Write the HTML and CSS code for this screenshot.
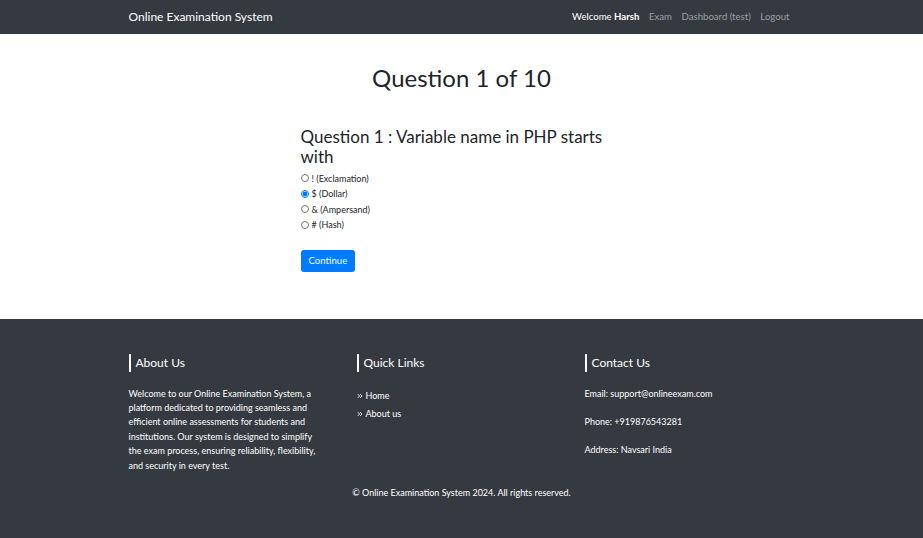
FILE: index.html
```html
<!DOCTYPE html>
<html lang="en">
<head>
<meta charset="utf-8">
<title>Online Examination System</title>
<link rel="stylesheet" href="styles.css">
</head>
<body>
<nav class="navbar">
  <div class="container nav-inner">
    <a class="brand" href="#">Online Examination System</a>
    <ul class="nav-links">
      <li class="welcome">Welcome <b>Harsh</b></li>
      <li><a href="#">Exam</a></li>
      <li><a href="#">Dashboard (test)</a></li>
      <li><a href="#">Logout</a></li>
    </ul>
  </div>
</nav>

<main class="container main">
  <h1 class="page-title">Question 1 of 10</h1>
  <form class="question">
    <h3 class="q-text">Question 1 : Variable name in PHP starts with</h3>
    <label class="opt"><input type="radio" name="ans"> ! (Exclamation)</label>
    <label class="opt"><input type="radio" name="ans" checked> $ (Dollar)</label>
    <label class="opt"><input type="radio" name="ans"> &amp; (Ampersand)</label>
    <label class="opt"><input type="radio" name="ans"> # (Hash)</label>
    <button type="button" class="btn">Continue</button>
  </form>
</main>

<footer class="footer">
  <div class="container">
    <div class="cols">
      <div class="col">
        <h5 class="f-head">About Us</h5>
        <p class="about">Welcome to our Online Examination System, a platform dedicated to providing seamless and efficient online assessments for students and institutions. Our system is designed to simplify the exam process, ensuring reliability, flexibility, and security in every test.</p>
      </div>
      <div class="col">
        <h5 class="f-head">Quick Links</h5>
        <ul class="links">
          <li><svg class="chev" viewBox="0 0 8 8" width="6" height="6"><path d="M1 1.5 L3.5 4 L1 6.5 M4.2 1.5 L6.7 4 L4.2 6.5" fill="none" stroke="#e9ecef" stroke-width="1.3"/></svg><a href="#">Home</a></li>
          <li><svg class="chev" viewBox="0 0 8 8" width="6" height="6"><path d="M1 1.5 L3.5 4 L1 6.5 M4.2 1.5 L6.7 4 L4.2 6.5" fill="none" stroke="#e9ecef" stroke-width="1.3"/></svg><a href="#">About us</a></li>
        </ul>
      </div>
      <div class="col">
        <h5 class="f-head">Contact Us</h5>
        <p class="contact">Email: support@onlineexam.com</p>
        <p class="contact">Phone: +919876543281</p>
        <p class="contact">Address: Navsari India</p>
      </div>
    </div>
    <p class="copy">© Online Examination System 2024. All rights reserved.</p>
  </div>
</footer>
</body>
</html>
```

FILE: styles.css
```css
* { box-sizing: border-box; }
html, body { margin: 0; padding: 0; }
body {
  font-family: "Lato", "Open Sans", sans-serif;
  font-size: 9.6px;
  line-height: 1.5;
  color: #212529;
  background: #fff;
}
a { text-decoration: none; color: inherit; }

.container {
  width: 684px;
  margin: 0 auto;
  padding: 0 9px;
}

.navbar {
  background: #343a40;
  height: 34px;
}
.nav-inner {
  display: flex;
  align-items: center;
  justify-content: space-between;
  height: 34px;
}
.brand {
  color: #fff;
  font-size: 12px;
  line-height: 1;
}
.nav-links {
  list-style: none;
  margin: 0 5px 0 0;
  padding: 0;
  display: flex;
}
.nav-links li {
  padding: 0 4.8px;
  color: rgba(255,255,255,.5);
  font-size: 9.6px;
}
.nav-links li:last-child { padding-right: 0; }
.nav-links li.welcome { color: #fff; }

.main { padding-bottom: 47px; }
.page-title {
  text-align: center;
  font-size: 24px;
  font-weight: 400;
  margin: 30px 0 0;
  line-height: 1.2;
}
.question {
  width: 322px;
  margin: 34px auto 0;
  display: flex;
  flex-direction: column;
  align-items: flex-start;
}
.q-text {
  font-size: 17px;
  font-weight: 400;
  line-height: 1.2;
  margin: 0 0 3px;
}
.opt {
  display: flex;
  align-items: center;
  gap: 3px;
  font-size: 9px;
  line-height: 15.5px;
}
.opt input {
  margin: 0;
  width: 8px;
  height: 8px;
}
.btn {
  margin-top: 17px;
  background: #007bff;
  color: #fff;
  border: 1px solid #007bff;
  border-radius: 2.4px;
  font-family: inherit;
  font-size: 9.6px;
  padding: 0 7px;
  height: 22px;
  width: 54px;
}

.footer {
  background: #343a40;
  color: #fff;
  padding: 35px 0 40px;
}
.cols {
  display: grid;
  grid-template-columns: repeat(3, 1fr);
  column-gap: 18px;
}
.f-head {
  font-size: 12px;
  font-weight: 400;
  margin: 0 0 15px;
  border-left: 2px solid #fff;
  padding-left: 5px;
  line-height: 18px;
}
.about {
  margin: 0;
  font-size: 9px;
  line-height: 14.4px;
  padding-right: 18px;
}
.links {
  list-style: none;
  margin: 0;
  padding: 0;
}
.links li {
  font-size: 9px;
  line-height: 18px;
  display: flex;
  align-items: center;
  gap: 3px;
}
.contact {
  margin: 0 0 13.6px;
  font-size: 9px;
  line-height: 14.4px;
}
.copy {
  text-align: center;
  margin: 13px 0 0;
  font-size: 9px;
  line-height: 14.4px;
}
```
